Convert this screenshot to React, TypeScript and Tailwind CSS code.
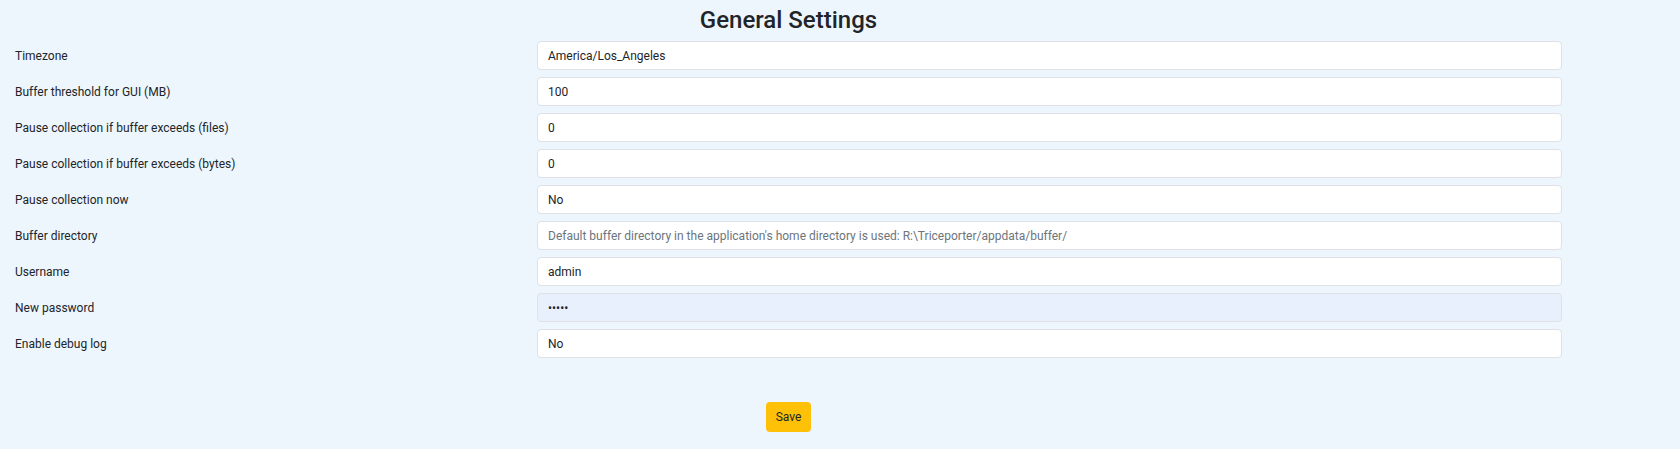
export default function App() {
  const rows: [string, string, string?][] = [
    ["Timezone", "America/Los_Angeles"],
    ["Buffer threshold for GUI (MB)", "100"],
    ["Pause collection if buffer exceeds (files)", "0"],
    ["Pause collection if buffer exceeds (bytes)", "0"],
    ["Pause collection now", "No"],
    ["Buffer directory", "Default buffer directory in the application's home directory is used: R:\\Triceporter/appdata/buffer/", "ph"],
    ["Username", "admin"],
    ["New password", "•••••", "pw"],
    ["Enable debug log", "No"],
  ];
  return (
    <div className="w-[1680px] h-[449px] bg-[#eef6fd] text-[#212529]" style={{ fontFamily: "Roboto, 'Liberation Sans', sans-serif" }}>
      <div className="w-[1577px]">
        <h1 className="h-[41px] pt-[4px] text-center text-[24px] leading-[32px] font-medium">General Settings</h1>
        <div className="flex flex-col gap-[7px]">
          {rows.map(([l, v, k]) => (
            <div key={l} className="flex items-center px-[15px]">
              <div className="w-[522px] text-[12px]">{l}</div>
              <div
                className={`w-[1025px] h-[29px] rounded-[4px] border border-[#dee2e6] px-[10px] flex items-center text-[12px] ${
                  k === "pw" ? "bg-[#e8f0fe]" : "bg-white"
                } ${k === "ph" ? "text-[#6c757d]" : ""}`}
              >
                {v}
              </div>
            </div>
          ))}
        </div>
        <div className="flex justify-center mt-[44px]">
          <button className="w-[45px] h-[30px] rounded-[4px] bg-[#ffc107] text-[12px] text-[#212529]">Save</button>
        </div>
      </div>
    </div>
  );
}
